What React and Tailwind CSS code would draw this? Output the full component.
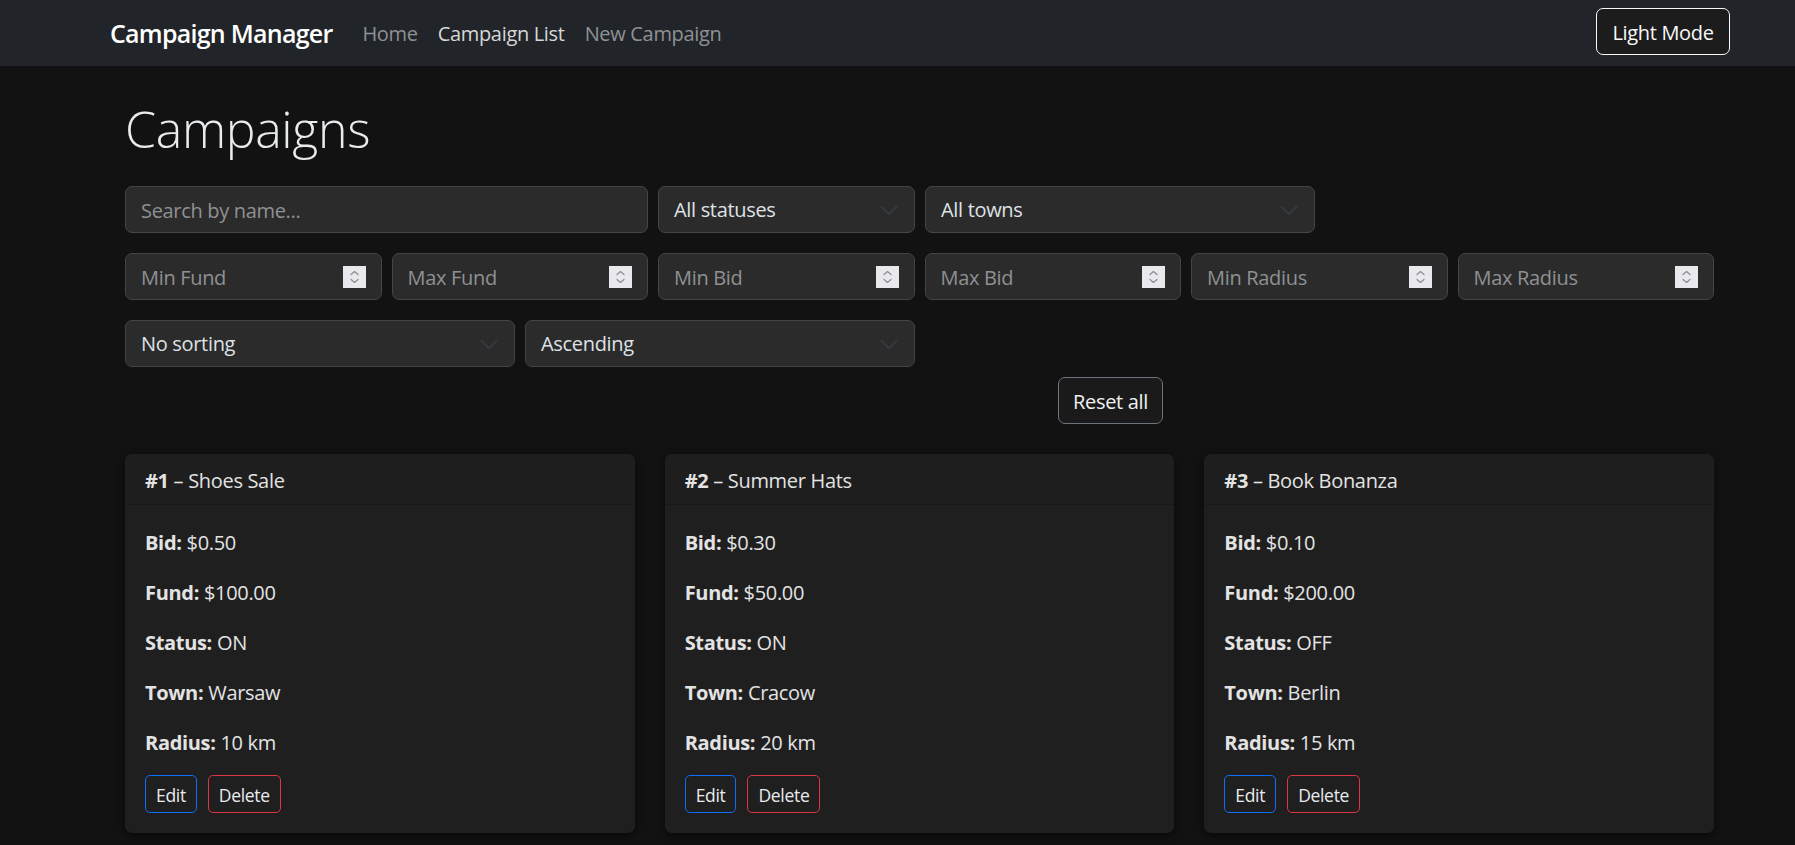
import React from "react";

function Chevron() {
  return (
    <svg width="20" height="15" viewBox="0 0 16 12" fill="none" className="shrink-0">
      <path d="m2 3 6 6 6-6" stroke="#343a40" strokeWidth="1.6" strokeLinecap="round" strokeLinejoin="round" />
    </svg>
  );
}

function Spinner() {
  return (
    <span className="flex h-[22px] w-[23px] shrink-0 items-center justify-center bg-[#e9e9ed]">
      <svg width="23" height="22" viewBox="0 0 23 22" fill="none">
        <path d="M8 8.5 L11.5 5.5 L15 8.5" stroke="#8a8a96" strokeWidth="1.2" strokeLinecap="round" strokeLinejoin="round" />
        <path d="M8 13.5 L11.5 16.5 L15 13.5" stroke="#8a8a96" strokeWidth="1.2" strokeLinecap="round" strokeLinejoin="round" />
      </svg>
    </span>
  );
}

function SelectBox({ label, className }) {
  return (
    <div className={"flex h-[47px] items-center justify-between rounded-[7px] border border-[#444] bg-[#2b2b2b] pl-[15px] pr-[15px] pt-[1px] text-[20px] text-[#dee2e6] " + className}>
      <span>{label}</span>
      <Chevron />
    </div>
  );
}

function NumberBox({ placeholder }) {
  return (
    <div className="flex h-[47px] items-center rounded-[7px] border border-[#444] bg-[#2b2b2b] pl-[15px] pr-[15px]">
      <input
        type="text"
        placeholder={placeholder}
        className="min-w-0 flex-1 bg-transparent pt-[2px] text-[20px] text-[#dee2e6] outline-none placeholder:text-[#8e9194]"
      />
      <Spinner />
    </div>
  );
}

const campaigns = [
  { id: 1, name: "Shoes Sale", bid: "$0.50", fund: "$100.00", status: "ON", town: "Warsaw", radius: "10 km" },
  { id: 2, name: "Summer Hats", bid: "$0.30", fund: "$50.00", status: "ON", town: "Cracow", radius: "20 km" },
  { id: 3, name: "Book Bonanza", bid: "$0.10", fund: "$200.00", status: "OFF", town: "Berlin", radius: "15 km" },
];

function Card({ c }) {
  const rows = [
    ["Bid:", c.bid],
    ["Fund:", c.fund],
    ["Status:", c.status],
    ["Town:", c.town],
    ["Radius:", c.radius],
  ];
  return (
    <div className="rounded-[7px] bg-[#1f1f1f] shadow-[0_3px_10px_rgba(0,0,0,0.55)]">
      <div className="rounded-t-[7px] border-b border-[#191919] bg-[#1e1e1e] px-[20px] pb-[8px] pt-[12px] text-[20px] leading-[30px] text-[#e3e3e3]">
        <span className="font-bold">#{c.id}</span> – {c.name}
      </div>
      <div className="p-[20px]">
        {rows.map(([k, v]) => (
          <p key={k} className="mb-[17px] pt-[3px] text-[20px] leading-[30px] text-[#e3e3e3]">
            <span className="font-bold">{k}</span> {v}
          </p>
        ))}
        <div className="flex gap-[11px]">
          <button className="h-[38px] rounded-[5px] border border-[#0d6efd] px-[10px] pt-[1px] text-[17.5px] leading-[26px] text-[#e9ecef]">
            Edit
          </button>
          <button className="h-[38px] rounded-[5px] border border-[#dc3545] px-[10px] pt-[1px] text-[17.5px] leading-[26px] text-[#e9ecef]">
            Delete
          </button>
        </div>
      </div>
    </div>
  );
}

export default function App() {
  return (
    <div className="min-h-screen bg-[#121212] font-['Open_Sans','Noto_Sans',sans-serif] tracking-[-0.02em] text-[#dee2e6]">
      <nav className="flex h-[66px] items-start bg-[#212529] pl-[110px] pr-[65px]">
        <span className="mr-[20px] mt-[15px] text-[25px] font-semibold leading-[37px] tracking-[-0.03em] text-white">
          Campaign Manager
        </span>
        <a className="mt-[19px] px-[10px] text-[20px] leading-[30px] text-[#8f9194]">Home</a>
        <a className="mt-[19px] px-[10px] text-[20px] leading-[30px] text-[#d6d7d8]">Campaign List</a>
        <a className="mt-[19px] px-[10px] text-[20px] leading-[30px] text-[#8f9194]">New Campaign</a>
        <button className="ml-auto mt-[8px] h-[47px] w-[134px] rounded-[7px] border border-[#f8f9fa] bg-[#1c1c1c] pt-[2px] text-[20px] text-[#f8f9fa]">
          Light Mode
        </button>
      </nav>

      <main className="ml-[125px] w-[1589px]">
        <h1 className="mb-[27px] pt-[33px] text-[50px] font-light leading-[60px] text-[#e9ecef]">Campaigns</h1>

        <div className="mb-[20px] flex gap-[10px]">
          <div className="flex h-[47px] w-[523px] items-center rounded-[7px] border border-[#444] bg-[#2b2b2b] px-[15px]">
            <input
              type="text"
              placeholder="Search by name..."
              className="min-w-0 flex-1 bg-transparent pt-[2px] text-[20px] text-[#dee2e6] outline-none placeholder:text-[#8e9194]"
            />
          </div>
          <SelectBox label="All statuses" className="w-[257px]" />
          <SelectBox label="All towns" className="w-[390px]" />
        </div>

        <div className="mb-[20px] grid grid-cols-6 gap-[10px]">
          {["Min Fund", "Max Fund", "Min Bid", "Max Bid", "Min Radius", "Max Radius"].map((p) => (
            <NumberBox key={p} placeholder={p} />
          ))}
        </div>

        <div className="flex gap-[10px]">
          <SelectBox label="No sorting" className="w-[390px]" />
          <SelectBox label="Ascending" className="w-[390px]" />
        </div>

        <div className="mt-[10px] pl-[933px]">
          <button className="h-[47px] w-[105px] rounded-[7px] border border-[#6c757d] bg-[#1a1a1a] pt-[2px] text-[20px] text-[#f1f1f1]">
            Reset all
          </button>
        </div>

        <div className="mt-[30px] grid grid-cols-3 gap-[30px]">
          {campaigns.map((c) => (
            <Card key={c.id} c={c} />
          ))}
        </div>
      </main>
    </div>
  );
}
